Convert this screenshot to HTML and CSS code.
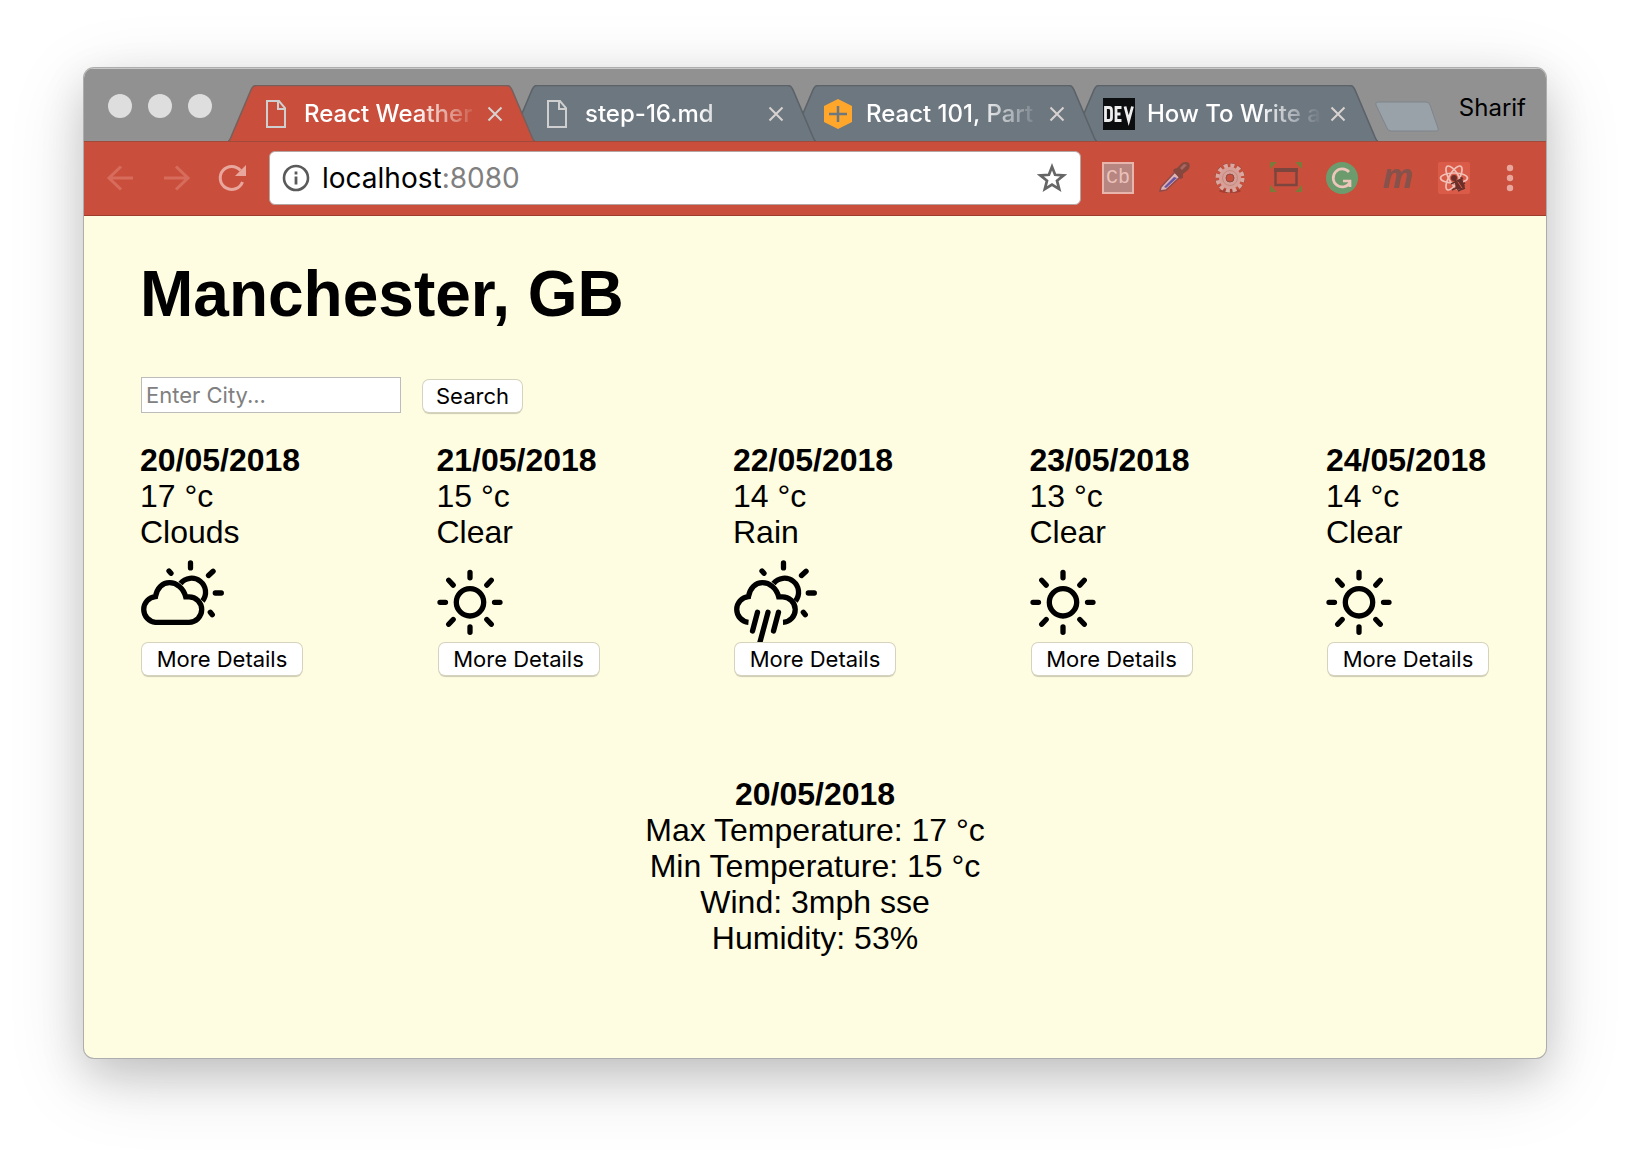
FILE: index.html
```html
<!DOCTYPE html>
<html lang="en">
<head>
<meta charset="utf-8">
<title>React Weather App</title>
<link rel="stylesheet" href="styles.css">
</head>
<body>
<svg class="defs" aria-hidden="true">
  <symbol id="tab-shape" viewBox="0 0 307 57" preserveAspectRatio="none">
    <path d="M0 57 C2 57 2 55 3 53 L23 5 C25 1 26 .5 29 .5 H278 C281 .5 282 1 284 5 L304 53 C305 55 305 57 307 57" vector-effect="non-scaling-stroke"/>
  </symbol>
  <symbol id="page" viewBox="0 0 32 32"><path d="M7 3h12l6 7v19H7zM18 3v8h7" fill="none" stroke="#d0cfcf" stroke-width="2"/></symbol>
  <symbol id="close" viewBox="0 0 24 24"><path d="M5.500 5.500l13 13m0-13l-13 13" fill="none" stroke="#d8d2d0" stroke-width="2"/></symbol>
  <symbol id="sun" viewBox="0 0 90 92">
    <g fill="none" stroke="#000" stroke-width="5.300" stroke-linecap="round">
      <circle cx="33" cy="52.300" r="13.700"/>
      <path d="M33 22.300v5.500M33 76.800v5.500M3 52.300h5.500M57.500 52.300H63M11.700 30.300l4.500 4.800M54.300 30.300l-4.500 4.800M11.700 74.300l4.500-4.800M54.300 74.300l-4.500-4.800"/>
    </g>
  </symbol>
  <symbol id="sun-behind" viewBox="0 0 90 92">
    <g fill="none" stroke="#000" stroke-width="5.300">
      <path d="M40.500 33.500A13.900 13.900 0 1 1 62.500 51"/>
      <path stroke-linecap="round" d="M50.500 12.900v5M68.500 25.500l4.600-4.300M75.300 43h6M70.300 62.300l2 2.400M29 21l2 2.200"/>
    </g>
  </symbol>
  <symbol id="clouds" viewBox="0 0 90 92">
    <use href="#sun-behind"/>
    <path fill="none" stroke="#000" stroke-width="5.300" d="M15.500 72.300A12.900 12.900 0 0 1 15.500 46.600C17 38 22.500 32.700 29.500 32.700S43.500 38 45.700 46.900H49A12.700 12.700 0 0 1 49 72.300Z"/>
  </symbol>
  <symbol id="rain" viewBox="0 0 90 92">
    <use href="#sun-behind"/>
    <path fill="none" stroke="#000" stroke-width="5.300" d="M15.500 72.300A12.900 12.900 0 0 1 15.500 46.600C17 38 22.500 32.700 29.500 32.700S43.500 38 45.700 46.900H49A12.700 12.700 0 0 1 50 72.300"/>
    <path fill="none" stroke="#000" stroke-width="5.300" stroke-linecap="round" d="M24.500 62.300l-5 18.700M35 62.300L27 92M45.500 62.300l-5 18.700"/>
  </symbol>
</svg>

<div class="window">
  <header class="titlebar">
    <div class="lights"><span class="light"></span><span class="light"></span><span class="light"></span></div>
    <nav class="tabs" aria-label="Tabs">
      <div class="tab tab-active">
        <svg class="tab-bg"><use href="#tab-shape"/></svg>
        <svg class="favicon"><use href="#page"/></svg>
        <span class="tab-title">React Weather</span>
        <button class="tab-close" aria-label="Close tab"><svg><use href="#close"/></svg></button>
      </div>
      <div class="tab">
        <svg class="tab-bg"><use href="#tab-shape"/></svg>
        <svg class="favicon"><use href="#page"/></svg>
        <span class="tab-title">step-16.md</span>
        <button class="tab-close" aria-label="Close tab"><svg><use href="#close"/></svg></button>
      </div>
      <div class="tab">
        <svg class="tab-bg"><use href="#tab-shape"/></svg>
        <svg class="favicon" viewBox="0 0 32 32"><path d="M16 1l14 7v16l-14 7-14-7V8z" fill="#ffa62b"/><path d="M16 8v16M7 16h18" stroke="#6d7780" stroke-width="2.500"/></svg>
        <span class="tab-title">React 101, Part</span>
        <button class="tab-close" aria-label="Close tab"><svg><use href="#close"/></svg></button>
      </div>
      <div class="tab">
        <svg class="tab-bg"><use href="#tab-shape"/></svg>
        <svg class="favicon" viewBox="0 0 32 32"><path d="M0 0h32v32H0z" fill="#0b0d0e"/><path d="M2.500 9.500v13H6q2.500 0 2.500-3v-7q0-3-2.500-3zM18.500 9.500H13v13h5.500M13 16h4.500M22 8.500l3.700 14 3.800-14" fill="none" stroke="#eee" stroke-width="2.800"/></svg>
        <span class="tab-title">How To Write a</span>
        <button class="tab-close" aria-label="Close tab"><svg><use href="#close"/></svg></button>
      </div>
    </nav>
    <button class="new-tab" aria-label="New tab"><svg viewBox="0 0 66 32"><path d="M5 1h47q3 0 4 3l8 23q1 3-1 3H17q-3 0-4-3L2 4Q1 1 5 1z" fill="#9aa2a9" stroke="#7f858a"/></svg></button>
    <button class="profile">Sharif</button>
  </header>

  <div class="toolbar">
    <div class="tools">
      <button class="tool" aria-label="Back"><svg viewBox="0 0 32 32"><path d="M29 16H5M17 4.500L5 16l12 11.500" fill="none" stroke="#d76c5c" stroke-width="3"/></svg></button>
      <button class="tool" aria-label="Forward"><svg viewBox="0 0 32 32"><path d="M4 16h24M16 4.500L28 16 16 27.500" fill="none" stroke="#d76c5c" stroke-width="3"/></svg></button>
      <button class="tool" aria-label="Reload"><svg viewBox="0 0 32 32"><path d="M26.500 20A11.500 11.500 0 1 1 24.500 8.500" fill="none" stroke="#e8a69c" stroke-width="3"/><path d="M30 3v11H19z" fill="#e8a69c"/></svg></button>
    </div>
    <div class="omnibox">
      <svg class="info" viewBox="0 0 28 28"><circle cx="14" cy="14" r="12" fill="none" stroke="#5a5a5a" stroke-width="2.600"/><path d="M14 7.500v3M14 12.500v8" stroke="#5a5a5a" stroke-width="2.800"/></svg>
      <span class="url">localhost<span class="port">:8080</span></span>
      <button class="star" aria-label="Bookmark"><svg viewBox="0 0 32 32"><path d="M16 4.800l3.100 8 8.600.5-6.700 5.400 2.200 8.400L16 22.500l-7.200 4.600 2.200-8.400-6.700-5.400 8.600-.5z" fill="none" stroke="#666" stroke-width="2.700"/></svg></button>
    </div>
    <div class="tools">
      <button class="tool cb" aria-label="Codebase">Cb</button>
      <button class="tool" aria-label="Colour picker"><svg viewBox="0 0 32 32"><path d="M3 25L17 10l5 5L8 28l-6 1z" fill="#dfb3b4" stroke="#8f4a49" stroke-width="1.500"/><path d="M6 25L16 15l3 1L8 26z" fill="#6a54a4"/><path d="M16 7l3-1 5-5q4-2 7 0 2 4-1 7l-5 4v4l-3 1-7-8z" fill="#86473f"/><path d="M22 6l4-4 3 1-5 5z" fill="#a9685f"/></svg></button>
      <button class="tool" aria-label="Settings extension"><svg viewBox="0 0 32 32"><ellipse cx="16" cy="29" rx="11" ry="2" fill="#a83e30"/><circle cx="16" cy="16" r="12.500" fill="none" stroke="#8e4e45" stroke-width="5" stroke-dasharray="4.200 2.345"/><circle cx="16" cy="16" r="12.300" fill="none" stroke="#dda79f" stroke-width="4.500" stroke-dasharray="3.900 2.540"/><circle cx="16" cy="16" r="7.500" fill="none" stroke="#d69f97" stroke-width="7"/><circle cx="16" cy="16" r="7.500" fill="none" stroke="#c48a81" stroke-width="1"/><circle cx="16" cy="16" r="4" fill="#c94f3c" stroke="#8e4e45"/></svg></button>
      <button class="tool" aria-label="Window resizer"><svg viewBox="0 0 32 32"><path d="M0 0h7L0 7zM32 0h-7l7 7zM0 30h7l-7-7zM32 30h-7l7-7z" fill="#7a7a3b"/><path d="M5.500 8v15h21V8" fill="none" stroke="#7c463f" stroke-width="2.500"/><path d="M4 8h24" stroke="#7c463f" stroke-width="4"/></svg></button>
      <button class="tool" aria-label="Grammar checker"><svg viewBox="0 0 32 32"><circle cx="16" cy="16" r="16" fill="#6c9c6d"/><path d="M23 10A9 9 0 1 0 24 20.500M17 19h7v6" fill="none" stroke="#ecc5bb" stroke-width="2.700"/></svg></button>
      <button class="tool mark" aria-label="Markdown preview">m</button>
      <button class="tool" aria-label="React tools"><svg viewBox="0 0 32 32"><rect width="32" height="32" rx="2" fill="#da5b48"/><g fill="none" stroke="#f0c0b7" stroke-width="1.700"><ellipse cx="16" cy="16" rx="13.500" ry="5"/><ellipse cx="16" cy="16" rx="13.500" ry="5" transform="rotate(60 16 16)"/><ellipse cx="16" cy="16" rx="13.500" ry="5" transform="rotate(120 16 16)"/></g><path d="M17 21l6-4 4 7-4 4-5-1z" fill="#6b302a"/><circle cx="16" cy="16" r="3" fill="#6b302a"/><path d="M13 22l12-6M14 28l13-7M20 29l7-3M17 18l3 10M23 15l3 11" stroke="#6b302a" stroke-width="1.500"/><path d="M20 20l4 6" stroke="#da5b48"/></svg></button>
      <button class="tool" aria-label="Menu"><svg viewBox="0 0 32 32"><g fill="#e8a69c"><circle cx="16" cy="6" r="3.200"/><circle cx="16" cy="16" r="3.200"/><circle cx="16" cy="26" r="3.200"/></g></svg></button>
    </div>
  </div>

  <main class="page">
    <h1>Manchester, GB</h1>
    <form class="search">
      <input class="city" type="text" placeholder="Enter City..." aria-label="City">
      <button class="btn" type="button">Search</button>
    </form>
    <section class="forecast">
      <article class="day">
        <strong>20/05/2018</strong><span>17 °c</span><span>Clouds</span>
        <svg class="weather"><use href="#clouds"/></svg>
        <button class="btn" type="button">More Details</button>
      </article>
      <article class="day">
        <strong>21/05/2018</strong><span>15 °c</span><span>Clear</span>
        <svg class="weather"><use href="#sun"/></svg>
        <button class="btn" type="button">More Details</button>
      </article>
      <article class="day">
        <strong>22/05/2018</strong><span>14 °c</span><span>Rain</span>
        <svg class="weather"><use href="#rain"/></svg>
        <button class="btn" type="button">More Details</button>
      </article>
      <article class="day">
        <strong>23/05/2018</strong><span>13 °c</span><span>Clear</span>
        <svg class="weather"><use href="#sun"/></svg>
        <button class="btn" type="button">More Details</button>
      </article>
      <article class="day">
        <strong>24/05/2018</strong><span>14 °c</span><span>Clear</span>
        <svg class="weather"><use href="#sun"/></svg>
        <button class="btn" type="button">More Details</button>
      </article>
    </section>
    <section class="details">
      <strong>20/05/2018</strong>
      <span>Max Temperature: 17 °c</span>
      <span>Min Temperature: 15 °c</span>
      <span>Wind: 3mph sse</span>
      <span>Humidity: 53%</span>
    </section>
  </main>
</div>
</body>
</html>
```

FILE: styles.css
```css
* {
  box-sizing: border-box;
}

body {
  margin: 0;
  padding: 68px 84px 100px;
  min-height: 100vh;
  display: flex;
  background: #fff;
  color: #000;
  font-family: "Liberation Sans", Arial, sans-serif;
}

.defs {
  position: absolute;
  width: 0;
  height: 0;
}

button {
  margin: 0;
  padding: 0;
  border: 0;
  background: none;
  color: inherit;
  font-family: Inter, sans-serif;
}

svg {
  display: block;
}

/* Browser window */
.window {
  flex: 1;
  min-width: 0;
  display: flex;
  flex-direction: column;
  border-radius: 10px;
  overflow: hidden;
  background: #fffde1;
  box-shadow: 0 0 0 1px #adadad, 0 20px 80px rgba(0, 0, 0, 0.14), 0 16px 44px rgba(0, 0, 0, 0.16);
}

.titlebar {
  display: flex;
  height: 73px;
  padding: 0 20px 0 24px;
  background: #919191;
  border-top: 1px solid #c8c8c8;
}

.lights {
  display: flex;
  gap: 16px;
  padding-top: 25px;
}

.light {
  width: 24px;
  height: 24px;
  border-radius: 50%;
  background: #dedede;
}

.tabs {
  flex: 0 1 1124px;
  display: flex;
  min-width: 0;
  margin-left: 16px;
  padding-top: 16px;
}

.tab {
  position: relative;
  flex: 0 1 307px;
  min-width: 0;
  display: flex;
  align-items: center;
  gap: 12px;
  height: 56px;
  padding: 2px 28px 0 32px;
  margin-right: -26px;
  z-index: 1;
}

.tab:nth-child(1) { z-index: 4; }
.tab:nth-child(2) { z-index: 3; }
.tab:nth-child(3) { z-index: 2; }

.tab-bg {
  position: absolute;
  inset: 0;
  z-index: -1;
  width: 100%;
  height: 100%;
  fill: #6d7780;
  stroke: #5b6268;
  stroke-width: 1.5px;
}

.tab-active .tab-bg {
  fill: #c94f3c;
  stroke: #77605c;
}

.favicon {
  flex: none;
  width: 32px;
  height: 32px;
}

.tab-title {
  flex: 1;
  min-width: 0;
  margin-right: -8px;
  overflow: hidden;
  white-space: nowrap;
  font: 500 24px/32px Inter, sans-serif;
  color: #fff;
  -webkit-mask-image: linear-gradient(to right, #000 calc(100% - 64px), transparent);
  mask-image: linear-gradient(to right, #000 calc(100% - 64px), transparent);
}

.tab-close,
.tab-close svg {
  flex: none;
  width: 24px;
  height: 24px;
}

.new-tab {
  flex: none;
  width: 66px;
  height: 32px;
  margin: 32px 0 0 22px;
}

.profile {
  height: 32px;
  margin: 23px 0 0 auto;
  font-size: 24px;
  line-height: 32px;
}

/* Toolbar */
.toolbar {
  display: flex;
  align-items: center;
  gap: 21px;
  height: 75px;
  padding: 0 20px 2px;
  background: #c94f3c;
  border-top: 1px solid #a04a3c;
  border-bottom: 1px solid #9c3d2e;
}

.tools {
  display: flex;
  gap: 24px;
}

.tool,
.tool svg {
  width: 32px;
  height: 32px;
}

.cb {
  border: 2px solid #e8b5ac;
  background: #b78680;
  color: #ebc1ba;
  font: 20px/28px "Liberation Mono", monospace;
}

.mark {
  padding-bottom: 6px;
  color: #86524b;
  font: italic bold 34px/26px "Open Sans", sans-serif;
}

.omnibox {
  flex: 1;
  min-width: 0;
  display: flex;
  align-items: center;
  gap: 12px;
  height: 54px;
  padding: 0 12px;
  border: 1px solid #b5a5a2;
  border-radius: 6px;
  background: #fff;
}

.info {
  width: 28px;
  height: 28px;
}

.url {
  flex: 1;
  font: 28px/36px Inter, sans-serif;
}

.port {
  color: #808080;
}

.star,
.star svg {
  width: 32px;
  height: 32px;
}

/* Weather page */
.page {
  flex: 1;
  padding: 41px 56px 100px;
  font-size: 32px;
  line-height: 36px;
}

h1 {
  margin: 0 0 46px;
  font-size: 64px;
  line-height: 74px;
}

.search {
  display: flex;
  align-items: center;
  gap: 20px;
  margin-bottom: 29px;
  padding-left: 1px;
}

.city {
  width: 260px;
  height: 36px;
  padding: 0 4px;
  border: 1px solid #bcbcbc;
  border-radius: 0;
  background: #fff;
  font: 22px/32px Inter, sans-serif;
}

.city::placeholder {
  color: #808080;
  opacity: 1;
}

.btn {
  height: 32px;
  margin: 1px 2px 0;
  padding: 0 13px;
  border-radius: 6px;
  background: #fff;
  box-shadow: 0 0 0 1px #d5d3bd, 0 2px 1px rgba(0, 0, 0, 0.2);
  font-size: 22px;
  line-height: 32px;
  white-space: nowrap;
}

.forecast {
  display: flex;
  justify-content: space-between;
}

.day {
  display: flex;
  flex-direction: column;
  width: 164px;
}

.weather {
  width: 90px;
  height: 92px;
}

.details {
  display: flex;
  flex-direction: column;
  align-items: center;
  margin-top: 101px;
}
```
